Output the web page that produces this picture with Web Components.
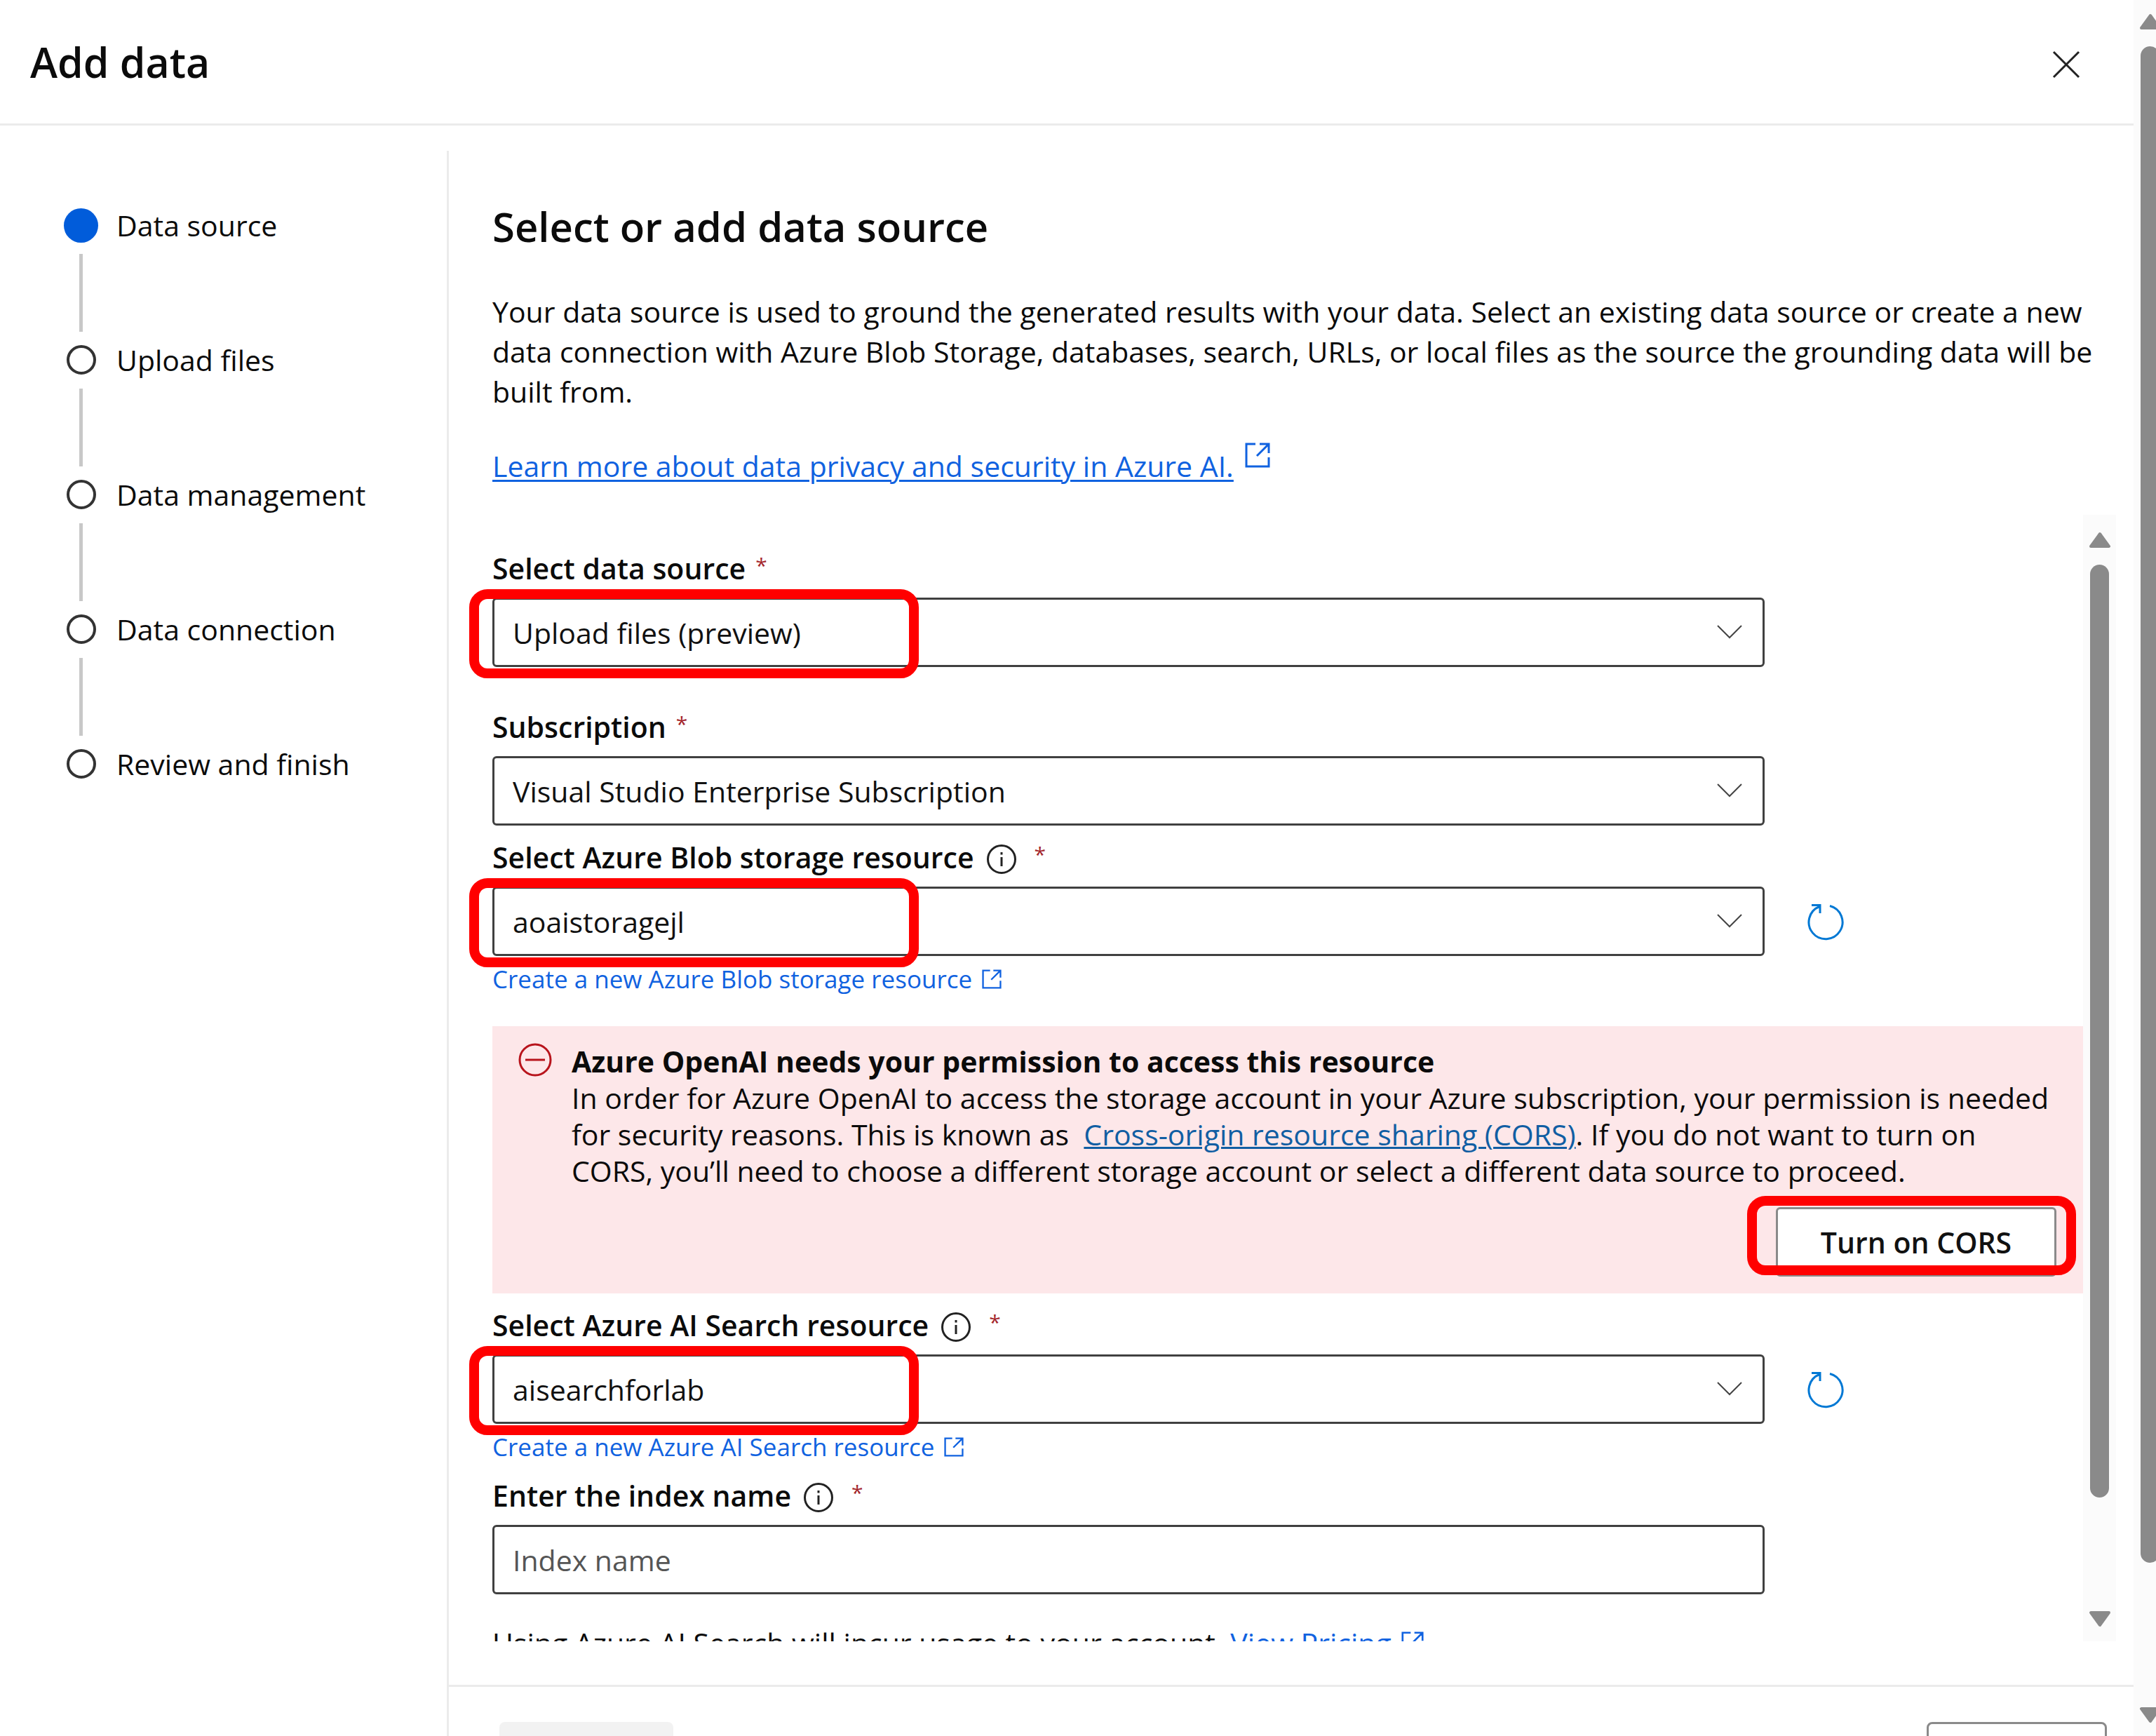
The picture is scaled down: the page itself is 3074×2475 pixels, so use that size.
<!DOCTYPE html>
<html lang="en">
<head>
<meta charset="utf-8">
<title>Add data</title>
<style>
  body { margin: 0; background: #fff; color: #0b0b0b; font-family: "Open Sans", "Noto Sans", sans-serif; font-size: 41px; }
</style>
</head>
<body>
<add-data-wizard></add-data-wizard>
<script>
const define = (name, render) => customElements.define(name, class extends HTMLElement {
  connectedCallback() {
    if (this.shadowRoot) return;
    this.attachShadow({ mode: 'open' }).innerHTML = '<style>*,*::before,*::after{box-sizing:border-box}</style>' + render(this);
  }
});

const openIcon = '<svg viewBox="0 0 36 36" fill="none" stroke="currentColor" stroke-width="3" aria-hidden="true"><path d="M15 2H2v32h32V21M21 2h13v13M34 2L17 19"/></svg>';

define('scroll-bar', el => `
  <style>
    :host { display: flex; flex-direction: column; align-items: center; width: 47px; padding: 24px 0 20px; background: #fbfbfb; color: #8a8a8a; }
    svg { width: 32px; height: 24px; flex: none; }
    .lane { flex: 1; width: 27px; margin: 23px 0 24px; }
    .thumb { width: 27px; height: var(--thumb); border-radius: 14px; background: currentColor; }
  </style>
  <svg viewBox="0 0 32 24"><path fill="currentColor" stroke="currentColor" stroke-width="4" stroke-linejoin="round" d="M16 3L29 21H3Z"/></svg>
  <div class="lane"><div class="thumb"></div></div>
  <svg viewBox="0 0 32 24"><path fill="currentColor" stroke="currentColor" stroke-width="4" stroke-linejoin="round" d="M3 3H29L16 21Z"/></svg>`);

define('panel-header', () => `
  <style>
    :host { display: flex; align-items: center; justify-content: space-between; height: 179px; padding: 0 66px 0 43px; border-bottom: 3px solid #ebebeb; }
    h1 { margin: 0; font-size: 59px; line-height: 80px; font-weight: 600; }
    button { width: 60px; height: 60px; padding: 0; border: 0; background: none; color: #222; }
    svg { display: block; }
  </style>
  <h1><slot></slot></h1>
  <button aria-label="Close"><svg viewBox="0 0 60 60" fill="none" stroke="currentColor" stroke-width="3"><path d="M12 16L48 52M48 16L12 52"/></svg></button>`);

define('wizard-step', el => `
  <style>
    :host { display: block; }
    .row { display: flex; align-items: center; gap: 26px; height: 60px; line-height: 64px; }
    .mark { display: flex; justify-content: center; width: 49px; }
    .mark i { width: 42px; height: 42px; border: 4px solid #333; border-radius: 50%; }
    :host([current]) i { width: 49px; height: 49px; border: 0; background: #015cda; }
    .line { width: 5px; height: 111px; margin: 11px 0 10px 22px; background: #c8c8c8; }
    :host(:last-of-type) .line { display: none; }
  </style>
  <div class="row"><span class="mark"><i></i></span><span><slot></slot></span></div>
  <div class="line"></div>`);

let uid = 0;
define('form-field', el => {
  const a = n => el.getAttribute(n), id = 'field' + (++uid);
  const control = el.hasAttribute('placeholder')
    ? `<input id="${id}" type="text" placeholder="${a('placeholder')}">`
    : `<select id="${id}"><option>${a('value')}</option></select>
       <svg class="chev" viewBox="0 0 36 20" fill="none" stroke="#444" stroke-width="2"><path d="M1 1L18 18L35 1"/></svg>`;
  return `
  <style>
    :host { display: block; }
    .label { display: flex; align-items: center; gap: 14px; margin-bottom: 12px; line-height: 60px; font-weight: 600; }
    .info { width: 42px; height: 42px; margin: 6px 12px 0 4px; padding: 0; border: 0; background: none; color: #222; }
    .info svg, .refresh svg { display: block; }
    .star { align-self: flex-start; font-size: 30px; line-height: 52px; font-weight: 400; color: #a4262c; }
    .line { display: flex; align-items: center; gap: 60px; }
    .box { position: relative; width: 80%; height: 99px; }
    select, input { appearance: none; width: 100%; height: 100%; padding: 0 26px; border: 3px solid #404040; border-radius: 6px; background: #fff; color: #111; font: inherit; outline: 0; }
    input::placeholder { color: #555; opacity: 1; }
    .chev { position: absolute; right: 32px; top: 39px; width: 36px; height: 20px; pointer-events: none; }
    :host([marked]) .box::after { content: ""; position: absolute; left: -33px; top: -12px; width: 641px; height: 127px; border: 14px solid #f00; border-radius: 26px; pointer-events: none; }
    .refresh { width: 54px; height: 54px; padding: 0; border: 0; background: none; color: #0078d4; }
    .create { display: flex; align-items: center; gap: 14px; width: fit-content; margin-top: 9px; font-size: 35px; line-height: 48px; color: #1062e0; text-decoration: none; }
    .create svg { width: 28px; height: 28px; }
  </style>
  <div class="label"><label for="${id}">${a('label')}</label>
    ${el.hasAttribute('info') ? '<button class="info" aria-label="Info"><svg viewBox="0 0 42 42" fill="none" stroke="currentColor" stroke-width="3"><circle cx="21" cy="21" r="19.5"/><path d="M21 18V31M21 11V14.500"/></svg></button>' : ''}
    <span class="star">*</span></div>
  <div class="line"><div class="box">${control}</div>
    ${el.hasAttribute('refresh') ? '<button class="refresh" aria-label="Refresh"><svg viewBox="0 0 54 54" fill="none" stroke="currentColor" stroke-width="3"><path d="M33 4.500A24 24 0 1 1 18 5.500M7 3.500H19V15"/></svg></button>' : ''}</div>
  ${el.hasAttribute('create') ? `<a class="create" href="#create">${a('create')}${openIcon}</a>` : ''}`;
});

define('permission-alert', () => `
  <style>
    :host { display: flex; flex-direction: column; height: 381px; padding: 24px 38px 0 37px; background: #fde7e9; }
    .top { display: flex; gap: 28px; }
    .top > svg { flex: none; width: 48px; height: 48px; }
    h3, p { margin: 0; font-size: 41px; line-height: 52px; }
    ::slotted(a) { color: #115ea3; text-decoration-thickness: 3px; }
    .action { position: relative; align-self: flex-end; margin-top: 26px; }
    button { width: 400px; height: 99px; border: 3px solid #8a8a8a; border-radius: 6px; background: #fff; color: #111; font: inherit; font-weight: 600; }
    .action::after { content: ""; position: absolute; left: -41px; right: -28px; top: -16px; bottom: 2px; border: 14px solid #f00; border-radius: 26px; pointer-events: none; }
  </style>
  <div class="top">
    <svg viewBox="0 0 48 48" fill="none" stroke="#b8141c" stroke-width="3"><circle cx="24" cy="24" r="22"/><path d="M10 24H38"/></svg>
    <div><h3><slot name="title"></slot></h3><p><slot></slot></p></div>
  </div>
  <div class="action"><button><slot name="action"></slot></button></div>`);

define('panel-footer', () => `
  <style>
    :host { display: flex; justify-content: space-between; height: 73px; padding: 50px 38px 0 72px; border-top: 3px solid #ebebeb; overflow: hidden; }
    button { flex: none; width: 257px; height: 99px; border: 3px solid #8a8a8a; border-radius: 8px; background: #fff; }
    button:disabled { width: 248px; border: 0; background: #f2f2f2; }
  </style>
  <button disabled aria-label="Back"></button><button aria-label="Next"></button>`);

define('add-data-wizard', () => `
  <style>
    :host { display: flex; height: 100vh; overflow: hidden; }
    .panel { flex: 1; min-width: 0; display: flex; flex-direction: column; }
    .outer { width: 32px; flex: none; overflow: hidden; display: flex; }
    .outer scroll-bar { flex: none; padding: 19px 0 18px; --thumb: 2162px; }
    .body { flex: 1; min-height: 0; display: flex; padding-top: 36px; }
    nav { flex: none; width: 637px; padding: 76px 0 0 91px; }
    .right { flex: 1; min-width: 0; display: flex; flex-direction: column; border-left: 3px solid #ebebeb; }
    main { flex: 1; min-height: 0; display: flex; flex-direction: column; padding: 68px 25px 62px 62px; }
    h2 { margin: 0 0 53px; font-size: 58px; line-height: 80px; font-weight: 600; }
    p { margin: 0; line-height: 57px; }
    .intro { margin-right: 20px; }
    .learn { display: flex; align-items: flex-start; gap: 16px; margin: 49px 0 41px; color: #1062e0; }
    .learn a { color: inherit; text-decoration-thickness: 3px; text-underline-offset: 4px; }
    .learn svg { width: 36px; height: 36px; margin-top: -5px; }
    .scroll { flex: 1; min-height: 0; display: flex; }
    .scroll scroll-bar { flex: none; --thumb: 1330px; }
    form { flex: 1; min-width: 0; margin-left: -33px; padding: 46px 0 0 33px; overflow: hidden; display: flex; flex-direction: column; gap: 15px; }
    form > * { flex: none; }
    .first { margin-bottom: 40px; }
    permission-alert { margin-top: 28px; }
    .price { margin-top: 24px; line-height: 60px; }
    .price a { color: #1062e0; text-decoration: none; }
    .price svg { width: 32px; height: 32px; margin-left: 14px; }
  </style>
  <div class="panel">
    <panel-header>Add data</panel-header>
    <div class="body">
      <nav>
        <wizard-step current>Data source</wizard-step>
        <wizard-step>Upload files</wizard-step>
        <wizard-step>Data management</wizard-step>
        <wizard-step>Data connection</wizard-step>
        <wizard-step>Review and finish</wizard-step>
      </nav>
      <div class="right">
        <main>
          <h2>Select or add data source</h2>
          <p class="intro">Your data source is used to ground the generated results with your data. Select an existing data source or create a new data connection with Azure Blob Storage, databases, search, URLs, or local files as the source the grounding data will be built from.</p>
          <p class="learn"><a href="#privacy">Learn more about data privacy and security in Azure AI.</a>${openIcon}</p>
          <div class="scroll">
            <form>
              <form-field class="first" marked label="Select data source" value="Upload files (preview)"></form-field>
              <form-field label="Subscription" value="Visual Studio Enterprise Subscription"></form-field>
              <form-field marked info refresh label="Select Azure Blob storage resource" value="aoaistoragejl" create="Create a new Azure Blob storage resource"></form-field>
              <permission-alert><span slot="title">Azure OpenAI needs your permission to access this resource</span>In order for Azure OpenAI to access the storage account in your Azure subscription, your permission is needed for security reasons. This is known as&nbsp; <a href="#cors">Cross-origin resource sharing (CORS)</a>. If you do not want to turn on CORS, you’ll need to choose a different storage account or select a different data source to proceed.<span slot="action">Turn on CORS</span></permission-alert>
              <form-field marked info refresh label="Select Azure AI Search resource" value="aisearchforlab" create="Create a new Azure AI Search resource"></form-field>
              <form-field info label="Enter the index name" placeholder="Index name"></form-field>
              <p class="price">Using Azure AI Search will incur usage to your account. <a href="#pricing">View Pricing${openIcon}</a></p>
            </form>
            <scroll-bar></scroll-bar>
          </div>
        </main>
        <panel-footer></panel-footer>
      </div>
    </div>
  </div>
  <div class="outer"><scroll-bar></scroll-bar></div>`);
</script>
</body>
</html>
